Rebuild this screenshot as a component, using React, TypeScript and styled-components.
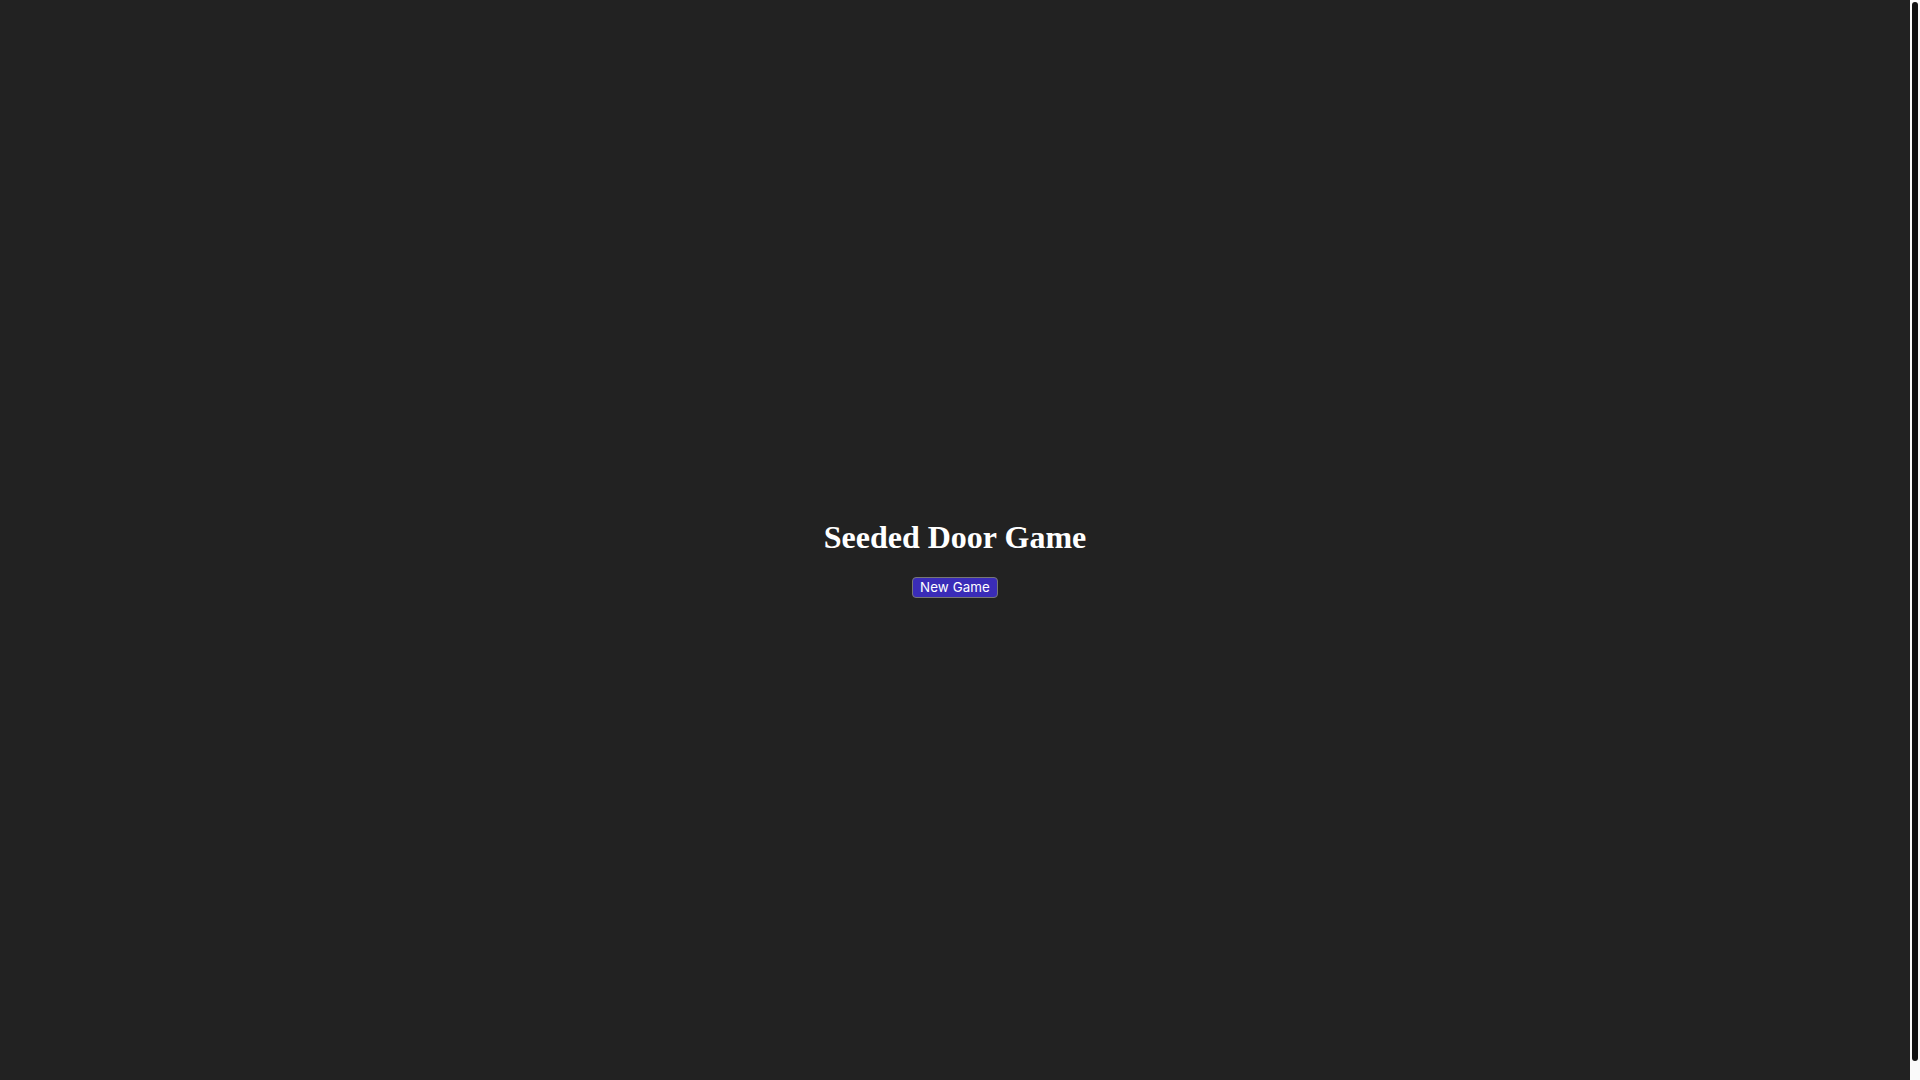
import React from "react";
import styled, { createGlobalStyle } from "styled-components";

const Global = createGlobalStyle`
  html, body {
    margin: 0;
    padding: 0;
    background: #222222;
    overflow: hidden;
  }
  body {
    color: #ffffff;
    font-family: "Liberation Serif", "Times New Roman", serif;
  }
`;

const Screen = styled.div`
  display: flex;
  flex-direction: row;
  width: 100vw;
  height: 100vh;
  background: #222222;
`;

const Main = styled.main`
  flex: 1;
  box-sizing: border-box;
  height: 100vh;
  padding-top: 16px;
  display: flex;
  align-items: center;
  justify-content: center;
`;

const Wrapper = styled.div`
  display: flex;
  flex-direction: column;
  align-items: center;
  text-align: center;
`;

const Title = styled.h1`
  margin: 21.44px 0;
  font-family: "Liberation Serif", "Times New Roman", serif;
  font-weight: 700;
  font-size: 32px;
  line-height: 37px;
  color: #ffffff;
`;

const Button = styled.button`
  font-family: Inter, "Liberation Sans", Arial, sans-serif;
  font-size: 13.33px;
  line-height: 15px;
  letter-spacing: 0.1px;
  color: #ffffff;
  background: #3a2cb8;
  border: 1px solid #767676;
  border-radius: 4px;
  padding: 2px 7px;
  cursor: pointer;
`;

const ScrollTrack = styled.div`
  width: 10px;
  flex: 0 0 10px;
  height: 100vh;
  box-sizing: border-box;
  padding: 2px 2px 19px 2px;
  background: #fafafa;
  display: flex;
`;

const ScrollThumb = styled.div`
  flex: 1;
  background: #111111;
  border-radius: 3px;
`;

export default function App() {
  return (
    <>
      <Global />
      <Screen>
        <Main>
          <Wrapper>
            <Title>Seeded Door Game</Title>
            <Button type="button">New Game</Button>
          </Wrapper>
        </Main>
        <ScrollTrack>
          <ScrollThumb />
        </ScrollTrack>
      </Screen>
    </>
  );
}
